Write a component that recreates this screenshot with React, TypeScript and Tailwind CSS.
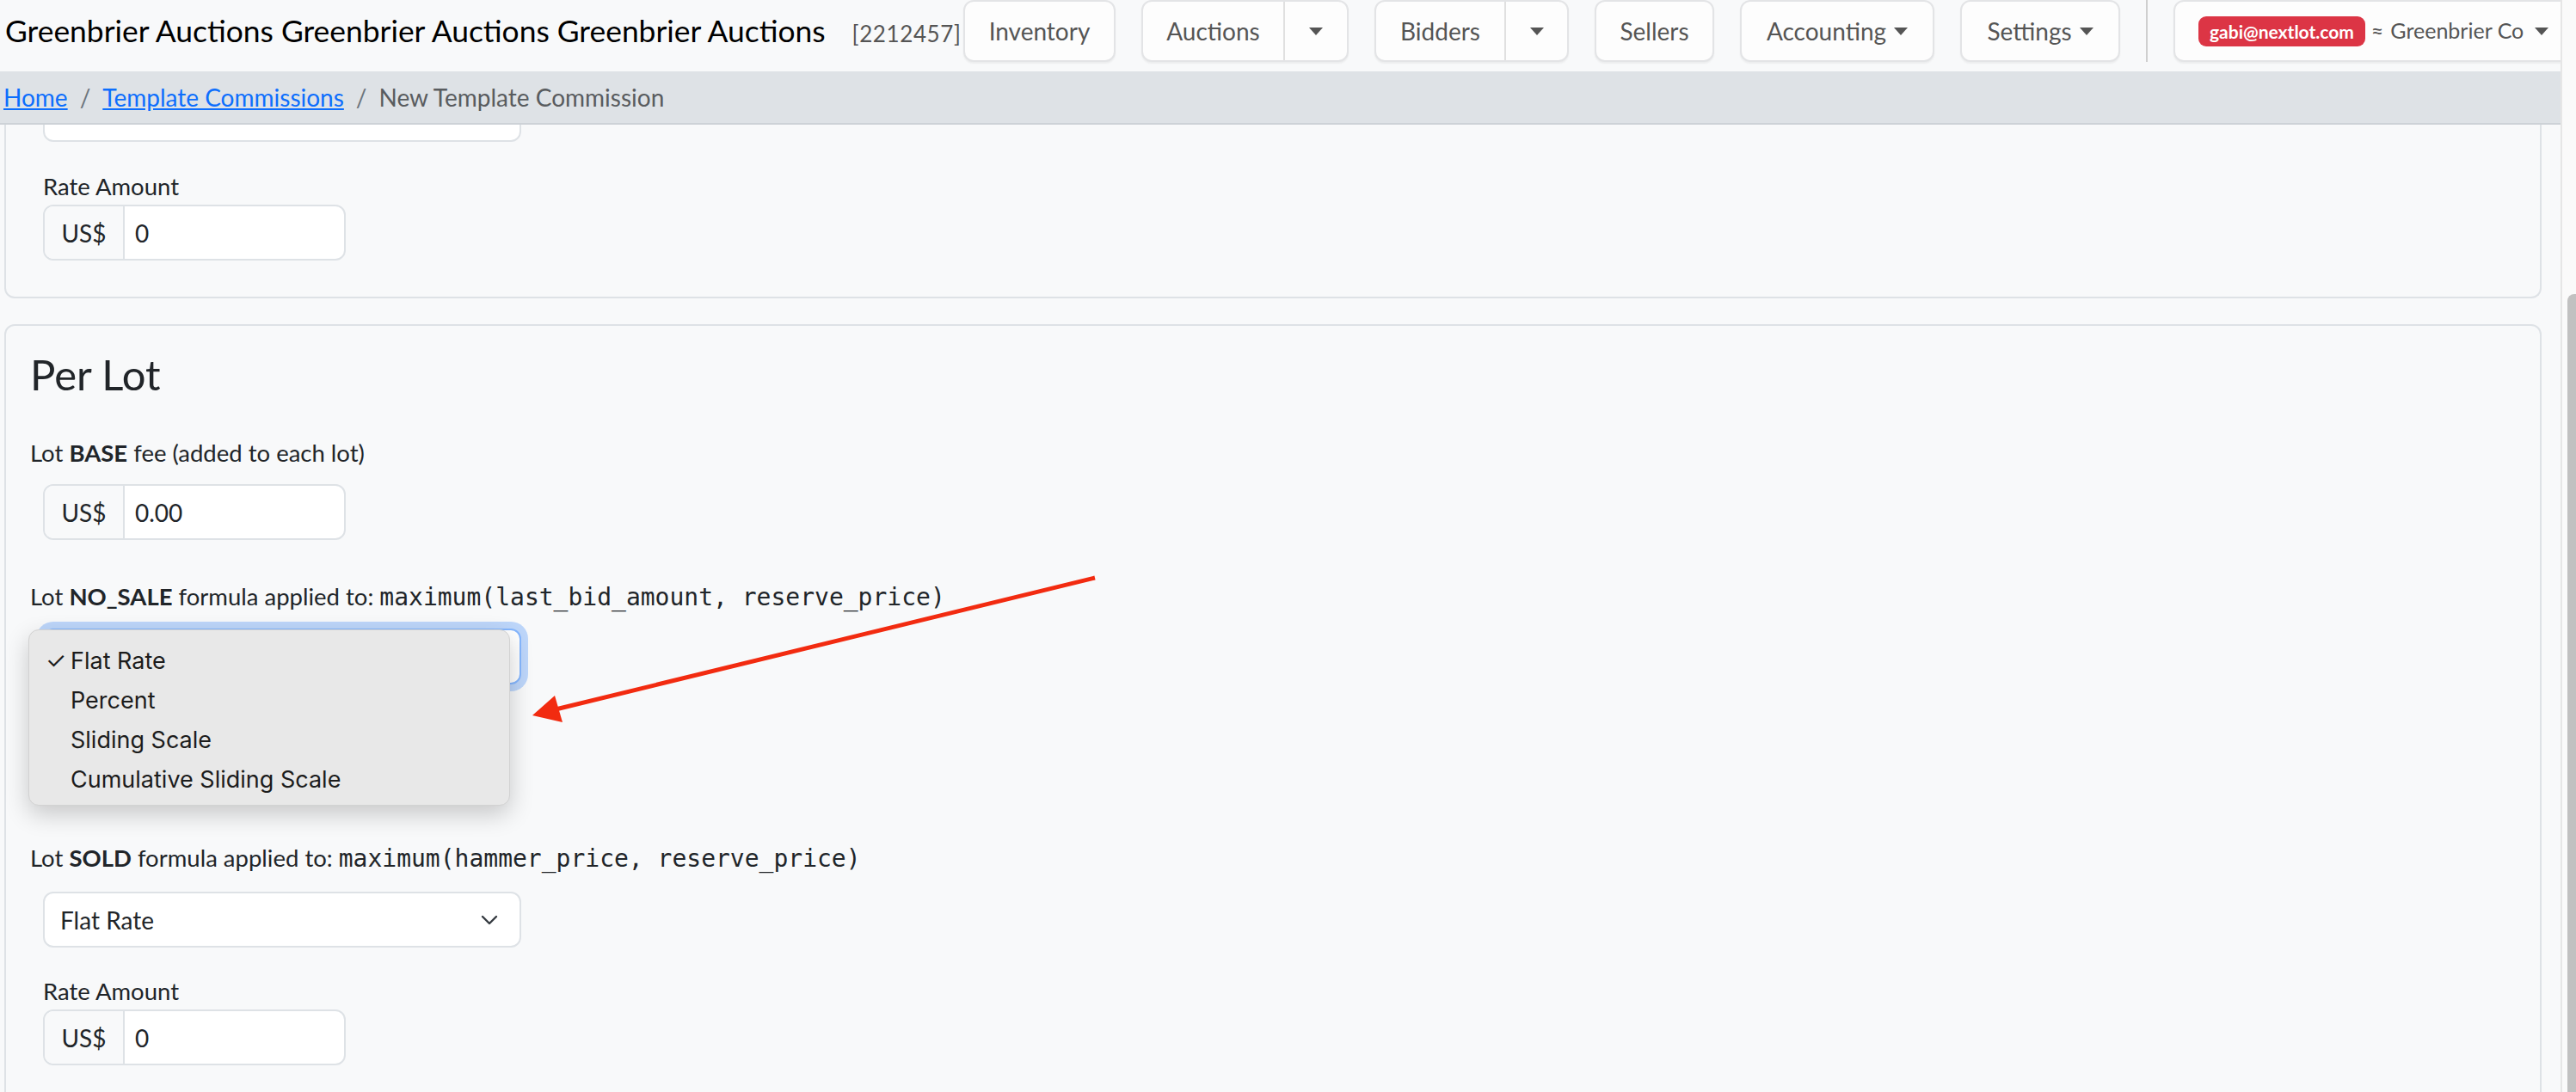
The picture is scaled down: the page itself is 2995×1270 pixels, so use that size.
import React from "react";

const lato = "font-['Lato','Liberation_Sans',sans-serif]";
const mono = "font-['DejaVu_Sans_Mono','Liberation_Mono',monospace]";

function Caret() {
  return (
    <span className="inline-block h-0 w-0 border-x-[8px] border-t-[9px] border-x-transparent border-t-[#555]" />
  );
}

function NavButton({ label, width, caret = false }: { label: string; width: string; caret?: boolean }) {
  return (
    <div
      className={[
        "flex h-[72px] flex-none items-center justify-center rounded-[12px] border-2 border-[#e3e4e6] bg-[#fdfdfd] text-[28px] text-[#555] shadow-[0_2px_2px_rgba(0,0,0,0.05)]",
        width,
      ].join(" ")}
    >
      <span>{label}</span>
      {caret ? (
        <span className="ml-[9px] flex items-center">
          <Caret />
        </span>
      ) : null}
    </div>
  );
}

function SplitButton({ label, mainWidth, caretWidth }: { label: string; mainWidth: string; caretWidth: string }) {
  return (
    <div className="flex h-[72px] flex-none rounded-[12px] border-2 border-[#e3e4e6] bg-[#fdfdfd] text-[28px] text-[#555] shadow-[0_2px_2px_rgba(0,0,0,0.05)]">
      <div className={["flex items-center justify-center border-r-2 border-[#e0e0e0]", mainWidth].join(" ")}>
        {label}
      </div>
      <div className={["flex items-center justify-center", caretWidth].join(" ")}>
        <Caret />
      </div>
    </div>
  );
}

function Header() {
  return (
    <header className="flex h-[83px] flex-none items-start overflow-hidden bg-[#f8f9fa]">
      <div className="flex h-[72px] w-[1120px] flex-none items-center pl-[6px]">
        <div className="flex items-baseline whitespace-nowrap">
          <span className="text-[35.4px] leading-[42px] text-black">
            Greenbrier Auctions Greenbrier Auctions Greenbrier Auctions
          </span>
          <span className="ml-[31px] text-[26px] leading-[31px] tracking-[0.6px] text-[#555]">[2212457]</span>
        </div>
      </div>
      <nav className="flex flex-none items-start gap-[30px] whitespace-nowrap">
        <NavButton label="Inventory" width="w-[177px]" />
        <SplitButton label="Auctions" mainWidth="w-[165px]" caretWidth="w-[72px]" />
        <SplitButton label="Bidders" mainWidth="w-[151px]" caretWidth="w-[71px]" />
        <NavButton label="Sellers" width="w-[139px]" />
        <NavButton label="Accounting" width="w-[226px]" caret />
        <NavButton label="Settings" width="w-[186px]" caret />
        <div className="h-[72px] w-[2px] flex-none bg-[#cfcfcf]" />
        <div className="flex h-[72px] w-[470px] flex-none items-center rounded-[12px] border-2 border-[#e3e4e6] bg-[#fdfdfd] pl-[27px] text-[25px] text-[#555] shadow-[0_2px_2px_rgba(0,0,0,0.05)]">
          <span className="flex h-[35px] flex-none items-center rounded-[9px] bg-[#dc3545] px-[13px] text-[21px] font-bold leading-none text-white">
            gabi@nextlot.com
          </span>
          <span className="ml-[7px] flex-none">≈</span>
          <span className="ml-[8px] flex-none">Greenbrier Co</span>
          <span className="ml-[13px] flex flex-none items-center">
            <Caret />
          </span>
        </div>
      </nav>
    </header>
  );
}

function Breadcrumb() {
  return (
    <div className="flex h-[62px] flex-none items-center border-b-2 border-[#cdd2d7] bg-[#dee2e6] pl-[4px] text-[28px] leading-[42px]">
      <a className="text-[#0d6efd] underline">Home</a>
      <span className="px-[14px] text-[#6c757d]">/</span>
      <a className="text-[#0d6efd] underline">Template Commissions</a>
      <span className="px-[14px] text-[#6c757d]">/</span>
      <span className="text-[#595c5f]">New Template Commission</span>
    </div>
  );
}

function Chevron() {
  return (
    <svg className="absolute right-[24px]" width="22" height="14" viewBox="0 0 22 14" fill="none">
      <path d="M3 3l8 8 8-8" stroke="#343a40" strokeWidth="2.4" strokeLinecap="round" strokeLinejoin="round" />
    </svg>
  );
}

function SelectBox({
  focused = false,
  covered = false,
  className = "",
  value = "Flat Rate",
}: {
  focused?: boolean;
  covered?: boolean;
  className?: string;
  value?: string;
}) {
  return (
    <div
      className={[
        "relative ml-[15px] flex h-[65px] w-[556px] flex-none items-center rounded-[12px] border-2 bg-white pl-[18px] text-[28px] text-[#212529]",
        focused
          ? "border-[#86b7fe] shadow-[0_0_0_8px_rgba(13,110,253,0.25)]"
          : "border-[#dee2e6]",
        className,
      ].join(" ")}
    >
      <span className={covered ? "invisible" : ""}>{value}</span>
      <Chevron />
    </div>
  );
}

function MoneyInput({ value, className = "" }: { value: string; className?: string }) {
  return (
    <div
      className={[
        "ml-[15px] flex h-[65px] w-[352px] flex-none overflow-hidden rounded-[12px] border-2 border-[#dee2e6] bg-white text-[28px] text-[#212529]",
        className,
      ].join(" ")}
    >
      <span className="flex w-[93px] items-center justify-center border-r-2 border-[#dee2e6] bg-[#f8f9fa]">US$</span>
      <span className="flex items-center pl-[12px]">{value}</span>
    </div>
  );
}

function Label({ children, className = "" }: { children: React.ReactNode; className?: string }) {
  return <div className={["text-[27.5px] leading-[42px] text-[#212529]", className].join(" ")}>{children}</div>;
}

function FormulaLabel({ kind, formula, className }: { kind: string; formula: string; className: string }) {
  return (
    <Label className={className}>
      Lot <b>{kind}</b> formula applied to: <span className={[mono, "text-[28px]"].join(" ")}>{formula}</span>
    </Label>
  );
}

function Menu() {
  const items = ["Flat Rate", "Percent", "Sliding Scale", "Cumulative Sliding Scale"];
  return (
    <div className="absolute left-[33px] top-[732px] flex h-[205px] w-[560px] flex-col rounded-[12px] border border-[#d2d2d2] bg-[#e8e8e8] pt-[13px] font-['Inter',sans-serif] text-[27px] text-[#1c1c1c] shadow-[0_10px_28px_rgba(0,0,0,0.2)]">
      {items.map((item, i) => (
        <div key={item} className="flex h-[46px] items-center pl-[19px]">
          <span className="w-[29px] text-[27px]">{i === 0 ? "✓" : ""}</span>
          <span>{item}</span>
        </div>
      ))}
    </div>
  );
}

function Arrow() {
  return (
    <svg className="pointer-events-none absolute left-0 top-0" width="2995" height="1270">
      <line x1="1273" y1="672" x2="646" y2="825" stroke="#f22b10" strokeWidth="5" />
      <polygon points="619,832 654,840 645,809" fill="#f22b10" />
    </svg>
  );
}

export default function App() {
  return (
    <div className={["relative flex h-[1270px] w-[2995px] overflow-hidden bg-[#f8f9fa]", lato].join(" ")}>
      <div className="flex min-w-0 flex-1 flex-col">
        <Header />
        <Breadcrumb />
        <main className="flex min-h-0 flex-1 flex-col overflow-hidden">
          {/* scrolled: top of this card sits under the sticky header */}
          <section className="ml-[5px] mr-[22px] flex flex-none flex-col rounded-b-[12px] border-2 border-t-0 border-[#dee2e6] px-[28px] pb-[42px]">
            <SelectBox className="-mt-[45px]" value="" />
            <Label className="ml-[15px] mt-[31px]">Rate Amount</Label>
            <MoneyInput value="0" />
          </section>

          <section className="ml-[5px] mr-[22px] mt-[30px] flex flex-none flex-col rounded-[12px] border-2 border-[#dee2e6] px-[28px] pb-[40px] pt-[27px]">
            <h3 className="text-[49px] leading-[59px] text-[#212529]">Per Lot</h3>
            <Label className="mt-[41px]">
              Lot <b>BASE</b> fee (added to each lot)
            </Label>
            <MoneyInput value="0.00" className="mt-[15px]" />

            <FormulaLabel
              kind="NO_SALE"
              formula="maximum(last_bid_amount, reserve_price)"
              className="mt-[45px]"
            />
            <SelectBox focused covered className="mt-[15px]" />
            {/* covered by the open menu */}
            <Label className="invisible ml-[15px] mt-[31px]">Rate Amount</Label>
            <MoneyInput value="0" className="invisible" />

            <FormulaLabel
              kind="SOLD"
              formula="maximum(hammer_price, reserve_price)"
              className="mt-[43px]"
            />
            <SelectBox className="mt-[17px]" />
            <Label className="ml-[15px] mt-[30px]">Rate Amount</Label>
            <MoneyInput value="0" />
          </section>
        </main>
      </div>

      <div className="flex w-[18px] flex-none flex-col border-l-2 border-[#e6e6e6] bg-[#fafafa] pl-[6px] pt-[342px]">
        <div className="flex-1 rounded-tl-[8px] bg-[#c1c1c1]" />
      </div>

      <Menu />
      <Arrow />
    </div>
  );
}
